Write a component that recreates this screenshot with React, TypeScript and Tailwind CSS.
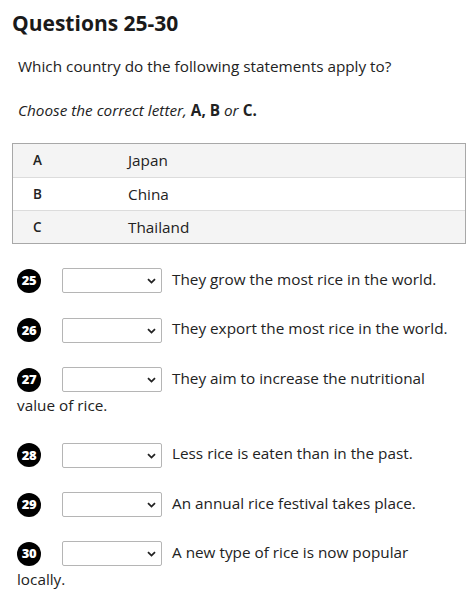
import React from "react"

const ROWS = [
  { letter: "A", name: "Japan" },
  { letter: "B", name: "China" },
  { letter: "C", name: "Thailand" },
]

const QUESTIONS = [
  { n: 25, text: "They grow the most rice in the world." },
  { n: 26, text: "They export the most rice in the world." },
  { n: 27, text: "They aim to increase the nutritional value of rice." },
  { n: 28, text: "Less rice is eaten than in the past." },
  { n: 29, text: "An annual rice festival takes place." },
  { n: 30, text: "A new type of rice is now popular locally." },
]

function Chevron() {
  return (
    <svg width="9" height="6" viewBox="0 0 9 6" className="absolute right-[5px] top-[9px]">
      <path d="M1 1.2 L4.5 4.6 L8 1.2" fill="none" stroke="#222" strokeWidth="1.8" />
    </svg>
  )
}

export default function App() {
  return (
    <div className="bg-white text-[#222] w-[472px] h-[599px] overflow-hidden" style={{ fontFamily: "'Open Sans', sans-serif" }}>
      <h1 className="px-3 pt-[9px] text-[21px] font-bold leading-[28px] text-[#1a1a1a]">Questions 25-30</h1>
      <p className="px-[18px] mt-[17px] text-[15.3px] leading-[24px]">Which country do the following statements apply to?</p>
      <p className="px-[18px] mt-[20px] text-[15.3px] leading-[24px] italic">
        Choose the correct letter, <b className="not-italic">A, B</b> or <b className="not-italic">C.</b>
      </p>

      <div className="ml-3 mt-[21px] w-[454px] border border-[#a8a8a8]">
        {ROWS.map((r, i) => (
          <div key={r.letter}
            className={`flex h-[33px] items-center text-[15.3px] ${i % 2 === 0 ? "bg-[#f4f4f4]" : "bg-white"} ${i > 0 ? "border-t border-[#dcdcdc]" : ""}`}>
            <span className="w-[115px] pl-[20px] text-[13.5px] font-semibold">{r.letter}</span>
            <span>{r.name}</span>
          </div>
        ))}
      </div>

      <div className="mt-[22px] px-[17px]">
        {QUESTIONS.map((q) => (
          <p key={q.n} className="mb-[22px] text-[15.3px] leading-[26px]">
            <span className="inline-flex h-[24px] w-[24px] items-center justify-center rounded-full bg-black align-middle text-[13px] leading-none font-extrabold tracking-[-0.4px] text-white">
              {q.n}
            </span>
            <span className="relative ml-[21px] mr-[10px] inline-block h-[25px] w-[100px] rounded-[2px] border border-[#b5b5b5] bg-white align-middle">
              <Chevron />
            </span>
            {q.text}
          </p>
        ))}
      </div>
    </div>
  )
}
